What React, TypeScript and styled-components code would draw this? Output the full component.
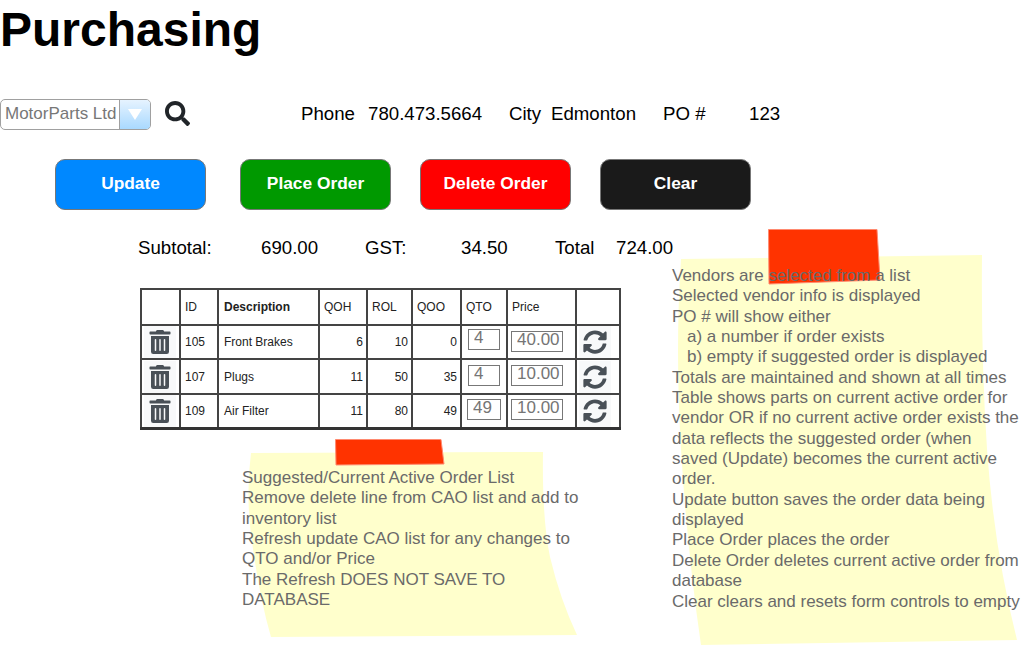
import { createGlobalStyle } from 'styled-components';
import styled from 'styled-components';
import { FaSearch, FaSyncAlt, FaTrashAlt } from 'react-icons/fa';

const GlobalStyle = createGlobalStyle`
  html, body {
    margin: 0;
    padding: 0;
    background: #fff;
    font-family: "Liberation Sans", Arial, sans-serif;
    color: #000;
  }
`;

const Page = styled.div`
  position: relative;
  width: 1021px;
  height: 650px;
  overflow: hidden;
`;

const Title = styled.h1`
  margin: 0;
  padding-top: 2px;
  font-size: 48px;
  line-height: 55px;
  font-weight: 700;
`;

const VendorRow = styled.div`
  display: flex;
  align-items: center;
  margin-top: 42px;
  height: 31px;
`;

const VendorSelect = styled.div`
  box-sizing: border-box;
  display: flex;
  width: 151px;
  height: 31px;
  border: 1px solid #a0a0a0;
  border-radius: 5px;
  overflow: hidden;
`;

const VendorName = styled.div`
  flex: 1;
  padding-left: 4px;
  font-size: 17px;
  line-height: 27px;
  color: #777;
  white-space: nowrap;
`;

const SelectArrow = styled.div`
  display: flex;
  align-items: center;
  justify-content: center;
  width: 30px;
  border-left: 1px solid #a0a0a0;
  background: linear-gradient(#e6f3ff, #a9d9ff);

  &::after {
    content: '';
    border-left: 7px solid transparent;
    border-right: 7px solid transparent;
    border-top: 11px solid #fff;
  }
`;

const SearchButton = styled.div`
  display: flex;
  margin: 0 0 2px 14px;
  color: #212529;
  font-size: 25px;
`;

const InfoGroup = styled.div`
  display: flex;
  margin: 0 0 2px 111px;
  font-size: 18.67px;
  line-height: 24px;
`;

const Cell = styled.span<{ $w: number }>`
  width: ${({ $w }) => $w}px;
  white-space: nowrap;
`;

const Actions = styled.div`
  display: flex;
  gap: 29px;
  margin: 29px 0 0 55px;
`;

const ActionButton = styled.button<{ $bg: string; $after?: number }>`
  box-sizing: border-box;
  width: 151px;
  height: 51px;
  padding: 0 0 2px;
  margin-right: ${({ $after }) => $after ?? 0}px;
  border: 1px solid #777;
  border-radius: 10px;
  background: ${({ $bg }) => $bg};
  color: #fff;
  font-family: inherit;
  font-size: 17.33px;
  font-weight: 700;
`;

const Totals = styled.div`
  display: flex;
  margin: 26px 0 0 138px;
  font-size: 18.67px;
  line-height: 24px;
`;

const OrderTable = styled.table`
  table-layout: fixed;
  width: 480px;
  margin: 28px 0 0 140px;
  border-collapse: collapse;
  border: 2px solid #333;
  border-bottom-width: 3px;
  font-size: 12px;
  color: #222;

  th, td {
    padding: 0 3px 0 4px;
    border: 2px solid #444;
  }

  th {
    height: 34px;
    font-weight: 400;
    text-align: left;
  }
`;

const PartRow = styled.tr<{ $h: number }>`
  td {
    height: ${({ $h }) => $h}px;
  }
`;

const BoldHead = styled.th`
  && {
    padding-left: 5px;
    font-weight: 700;
  }
`;

const NameCell = styled.td`
  && {
    padding-left: 5px;
  }
`;

const Num = styled.td`
  text-align: right;
`;

const IconCell = styled.td`
  && {
    padding: 0;
    text-align: center;
  }
`;

const IconButton = styled.div<{ $size: number; $shift: number }>`
  display: flex;
  align-items: center;
  justify-content: center;
  width: 32px;
  height: 32px;
  margin: 0 auto;
  background: #f8f9fa;
  color: #495057;
  font-size: ${({ $size }) => $size}px;
  transform: translateX(${({ $shift }) => $shift}px);
`;

const EntryCell = styled.td`
  && {
    padding: 0;
  }
`;

const Entry = styled.input<{ $w: number; $left: number; $up: number }>`
  box-sizing: border-box;
  display: block;
  width: ${({ $w }) => $w}px;
  height: 21px;
  margin: 0 0 ${({ $up }) => $up}px ${({ $left }) => $left}px;
  padding: 0 0 3px 5px;
  border: 1px solid #777;
  border-radius: 0;
  outline: none;
  font-family: inherit;
  font-size: 17px;
  color: #757575;
`;

const Note = styled.div<{ $x: number; $y: number; $w: number; $h: number }>`
  position: absolute;
  left: ${({ $x }) => $x}px;
  top: ${({ $y }) => $y}px;
  width: ${({ $w }) => $w}px;
  height: ${({ $h }) => $h}px;
`;

const NotePaper = styled.svg`
  position: absolute;
  left: 0;
  top: 0;
  width: 100%;
  height: 100%;
`;

const NoteText = styled.div<{ $y: number; $w: number }>`
  position: absolute;
  left: 0;
  top: ${({ $y }) => $y}px;
  width: ${({ $w }) => $w}px;
  font-size: 17px;
  line-height: 20.35px;
  color: #6a6a6a;
`;

const Indent = styled.div`
  padding-left: 15px;
`;

const parts = [
  { id: 105, name: 'Front Brakes', qoh: 6, rol: 10, qoo: 0, qto: '4', price: '40.00', qtoW: 32, qtoLeft: 6, qtoUp: 5, priceUp: 1, h: 32 },
  { id: 107, name: 'Plugs', qoh: 11, rol: 50, qoo: 35, qto: '4', price: '10.00', qtoW: 32, qtoLeft: 6, qtoUp: 3, priceUp: 3, h: 33 },
  { id: 109, name: 'Air Filter', qoh: 11, rol: 80, qoo: 49, qto: '49', price: '10.00', qtoW: 34, qtoLeft: 5, qtoUp: 3, priceUp: 3, h: 32 },
];

export default function App() {
  return (
    <Page>
      <GlobalStyle />
      <Title>Purchasing</Title>

      <VendorRow>
        <VendorSelect>
          <VendorName>MotorParts Ltd</VendorName>
          <SelectArrow />
        </VendorSelect>
        <SearchButton>
          <FaSearch />
        </SearchButton>
        <InfoGroup>
          <Cell $w={67}>Phone</Cell>
          <Cell $w={141}>780.473.5664</Cell>
          <Cell $w={42}>City</Cell>
          <Cell $w={112}>Edmonton</Cell>
          <Cell $w={86}>PO #</Cell>
          <Cell $w={40}>123</Cell>
        </InfoGroup>
      </VendorRow>

      <Actions>
        <ActionButton $bg="#0088ff" $after={5}>Update</ActionButton>
        <ActionButton $bg="#009900">Place Order</ActionButton>
        <ActionButton $bg="#ff0000">Delete Order</ActionButton>
        <ActionButton $bg="#1a1a1a">Clear</ActionButton>
      </Actions>

      <Totals>
        <Cell $w={123}>Subtotal:</Cell>
        <Cell $w={104}>690.00</Cell>
        <Cell $w={96}>GST:</Cell>
        <Cell $w={94}>34.50</Cell>
        <Cell $w={61}>Total</Cell>
        <Cell $w={60}>724.00</Cell>
      </Totals>

      <OrderTable>
        <colgroup>
          <col width={39} />
          <col width={38} />
          <col width={101} />
          <col width={48} />
          <col width={45} />
          <col width={49} />
          <col width={46} />
          <col width={69} />
          <col width={44} />
        </colgroup>
        <thead>
          <tr>
            <th />
            <th>ID</th>
            <BoldHead>Description</BoldHead>
            <th>QOH</th>
            <th>ROL</th>
            <th>QOO</th>
            <th>QTO</th>
            <th>Price</th>
            <th />
          </tr>
        </thead>
        <tbody>
          {parts.map((p) => (
            <PartRow key={p.id} $h={p.h}>
              <IconCell>
                <IconButton $size={24} $shift={-1}>
                  <FaTrashAlt />
                </IconButton>
              </IconCell>
              <td>{p.id}</td>
              <NameCell>{p.name}</NameCell>
              <Num>{p.qoh}</Num>
              <Num>{p.rol}</Num>
              <Num>{p.qoo}</Num>
              <EntryCell>
                <Entry $w={p.qtoW} $left={p.qtoLeft} $up={p.qtoUp} readOnly value={p.qto} />
              </EntryCell>
              <EntryCell>
                <Entry $w={52} $left={3} $up={p.priceUp} readOnly value={p.price} />
              </EntryCell>
              <IconCell>
                <IconButton $size={24} $shift={-3}>
                  <FaSyncAlt />
                </IconButton>
              </IconCell>
            </PartRow>
          ))}
        </tbody>
      </OrderTable>

      <Note $x={242} $y={439} $w={345} $h={200}>
        <NotePaper viewBox="0 0 345 200">
          <path
            d="M9 14 L301 13 Q300 80 308 118 Q318 160 335 196 L29 198 Q18 160 11 110 Q3 60 9 14 Z"
            fill="#ffffcc"
          />
          <path d="M93.5 0.5 L199 0.5 L202 25 L94 26 Z" fill="#ff3300" stroke="#ff8a70" strokeWidth="1" />
        </NotePaper>
        <NoteText $y={29} $w={345}>
          Suggested/Current Active Order List
          <br />
          Remove delete line from CAO list and add to inventory list
          <br />
          Refresh update CAO list for any changes to QTO and/or Price
          <br />
          The Refresh DOES NOT SAVE TO DATABASE
        </NoteText>
      </Note>

      <Note $x={672} $y={229} $w={349} $h={421}>
        <NotePaper viewBox="0 0 349 421">
          <path
            d="M9 30 L310 26 Q309 130 315 220 Q322 320 345 411 L29 416 Q15 320 9 220 Q3 120 9 30 Z"
            fill="#ffffcc"
          />
          <path d="M96.5 0.5 L205 0.5 L208 51 L97 55 Z" fill="#ff3300" stroke="#ff8a70" strokeWidth="1" />
        </NotePaper>
        <NoteText $y={37} $w={348}>
          Vendors are selected from a list
          <br />
          Selected vendor info is displayed
          <br />
          PO # will show either
          <Indent>a) a number if order exists</Indent>
          <Indent>b) empty if suggested order is displayed</Indent>
          Totals are maintained and shown at all times
          <br />
          Table shows parts on current active order for vendor OR if no current active order exists the data
          reflects the suggested order (when saved (Update) becomes the current active order.
          <br />
          Update button saves the order data being displayed
          <br />
          Place Order places the order
          <br />
          Delete Order deletes current active order from database
          <br />
          Clear clears and resets form controls to empty
        </NoteText>
      </Note>
    </Page>
  );
}
